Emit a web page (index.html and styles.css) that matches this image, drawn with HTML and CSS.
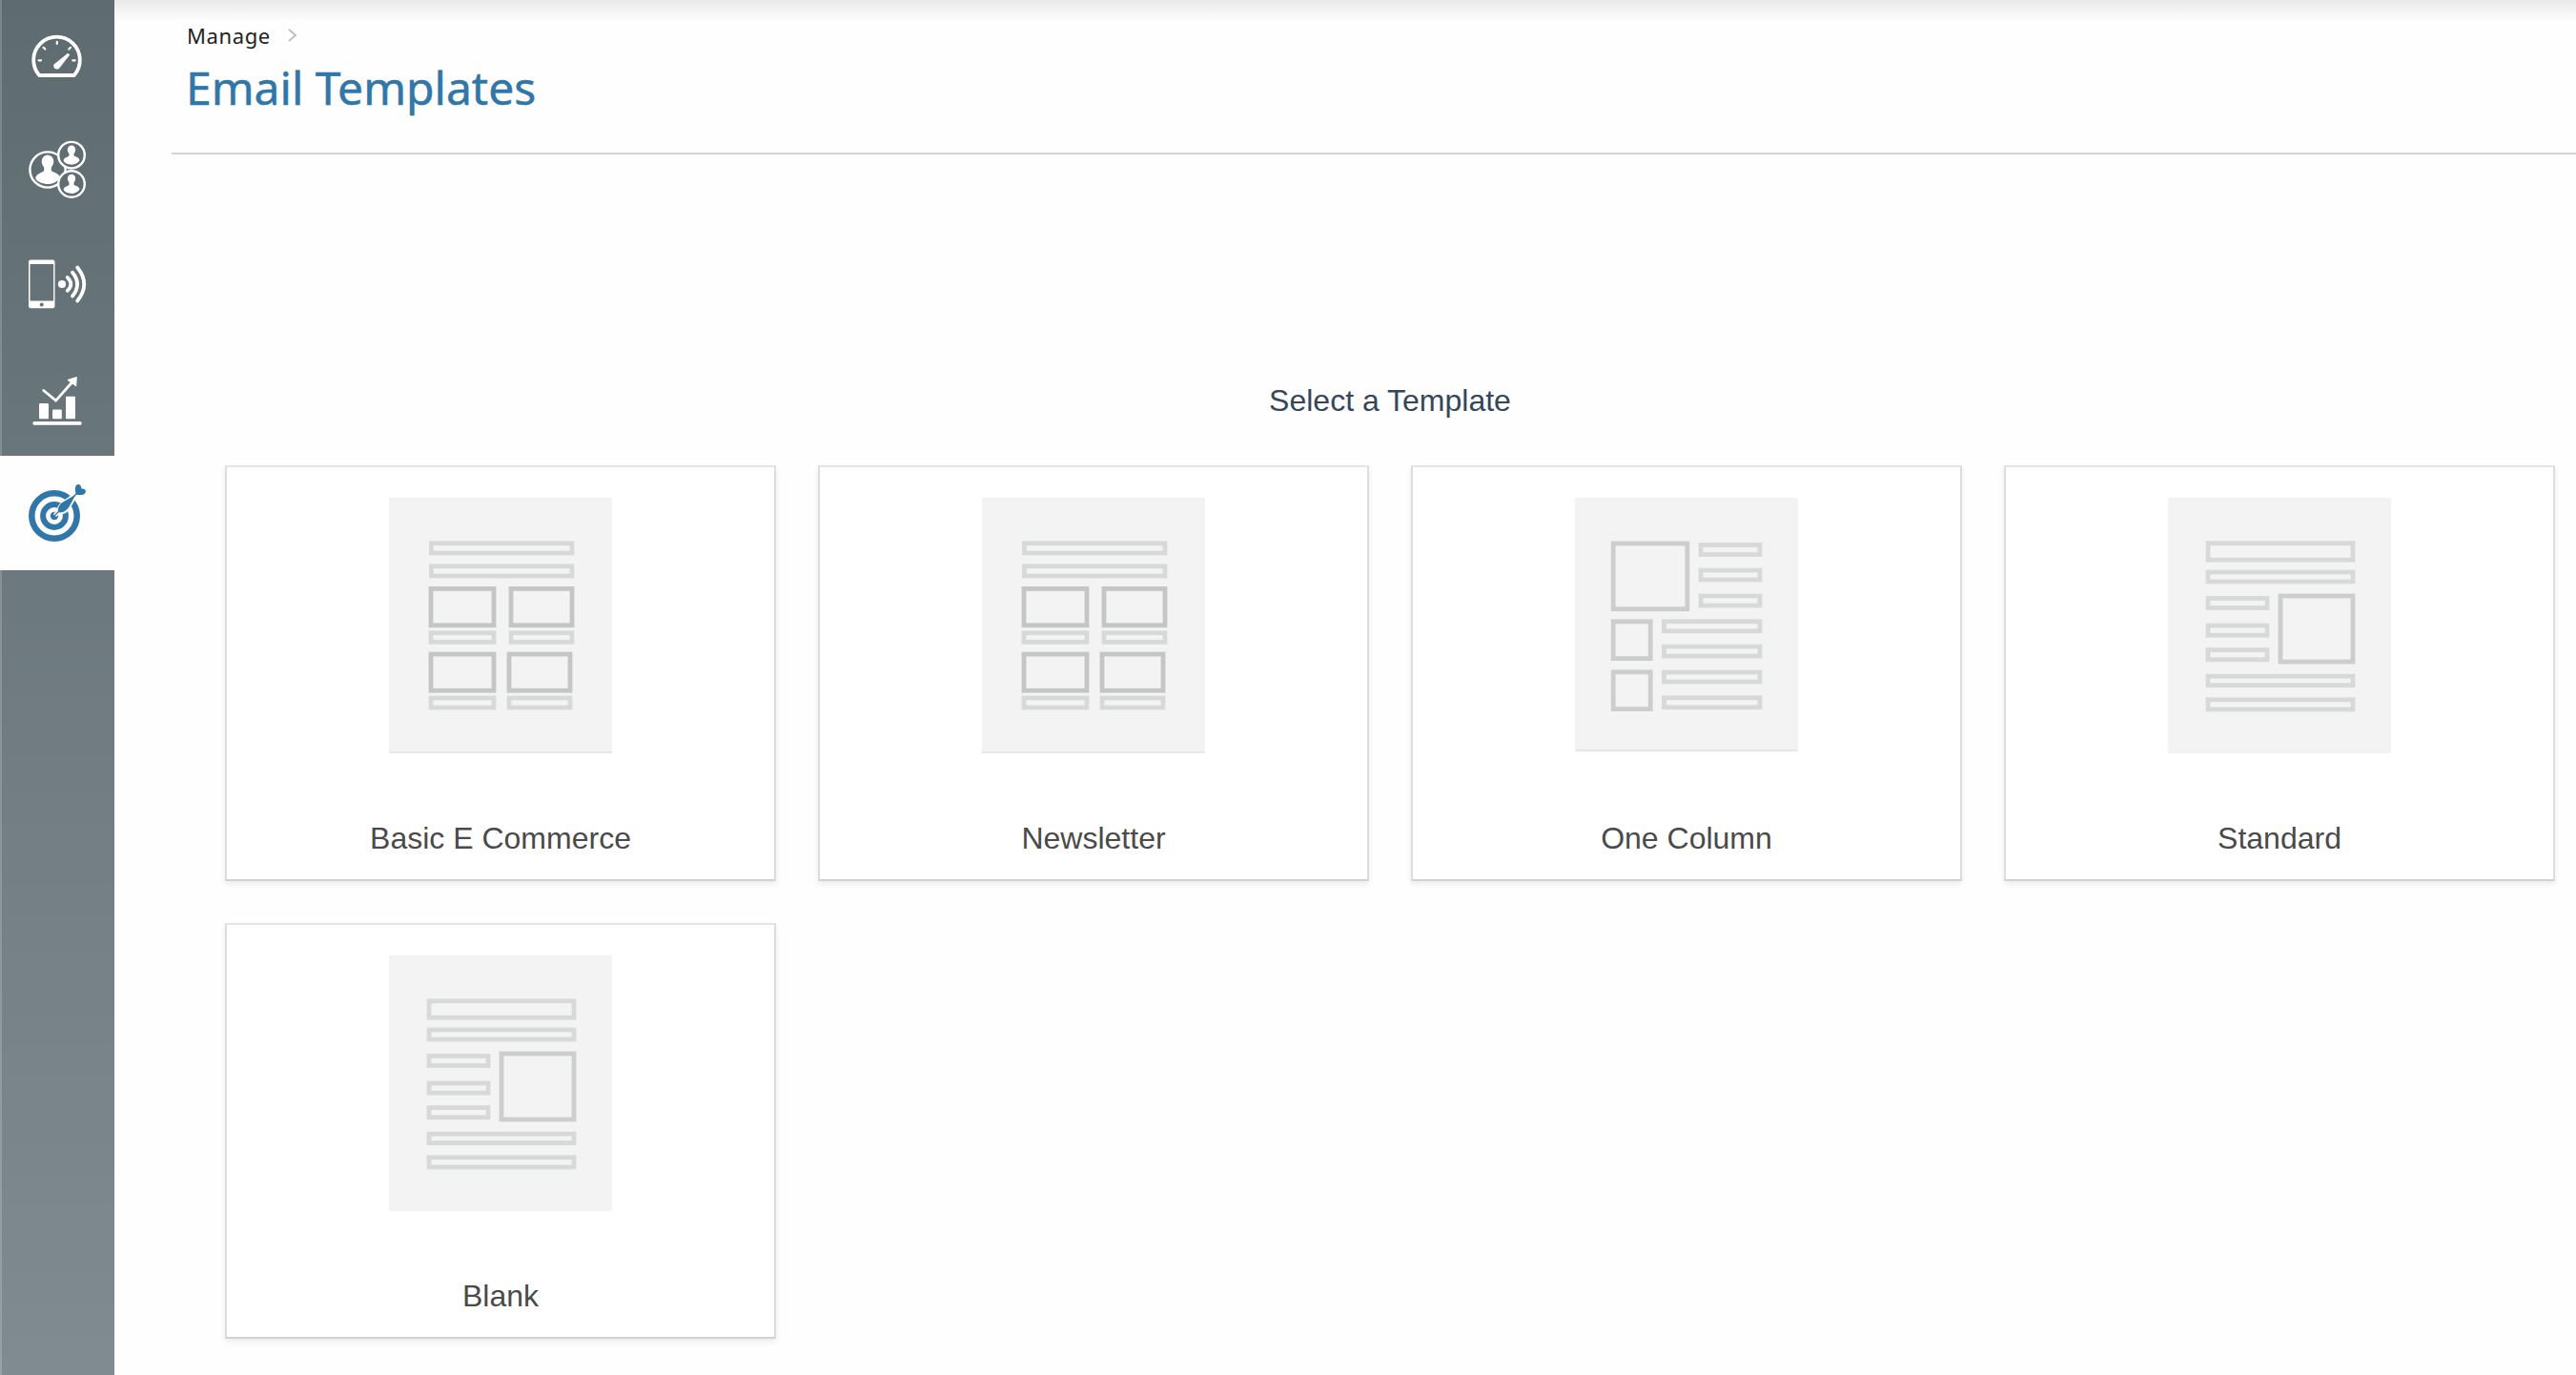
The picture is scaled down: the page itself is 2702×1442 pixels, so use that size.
FILE: index.html
```html
<!DOCTYPE html>
<html lang="en">
<head>
    <meta charset="UTF-8">
    <meta name="viewport" content="width=device-width, initial-scale=1.0">
    <title>Email Templates</title>
    <link rel="stylesheet" href="styles.css">
</head>
<body>

    <!-- Shared drawings -->
    <svg class="defs" width="0" height="0">
        <defs>
            <g id="person">
                <ellipse cx="0" cy="-8.4" rx="6.3" ry="7.2"/>
                <path d="M-3.8 -4h7.6v5c0 1.5 8.8 2.4 8.9 7.2C9 12.5 4.5 15 0 15S-12.5 12.5 -12.7 8.5C-12.5 4 -3.8 2.5 -3.8 1z"/>
                <path d="M3.8 1c0 1.5 8.7 3 8.9 7.5C10 13 5 15 0 15z"/>
            </g>
            <g id="thumb-grid">
                <path class="shade" d="M0 266h234v2H0z"/>
                <g class="bar">
                    <rect x="44.5" y="47.8" width="147.5" height="10.2"/>
                    <rect x="44.5" y="71.8" width="147.5" height="10.2"/>
                    <rect x="44" y="141.7" width="66" height="9.6"/>
                    <rect x="128" y="141.7" width="64" height="9.6"/>
                    <rect x="44" y="210" width="66" height="10"/>
                    <rect x="126" y="210" width="64" height="10"/>
                </g>
                <g class="box box-dark">
                    <rect x="44" y="95.4" width="66" height="38.4"/>
                    <rect x="128" y="95.4" width="64" height="38.4"/>
                    <rect x="44" y="164" width="66" height="38.2"/>
                    <rect x="126" y="164" width="64" height="38.2"/>
                </g>
            </g>
            <g id="thumb-article">
                <g class="bar">
                    <rect x="42" y="47.8" width="152" height="17.4"/>
                    <rect x="42" y="78" width="152" height="10"/>
                    <rect x="42" y="105.5" width="62" height="10"/>
                    <rect x="42" y="134" width="62" height="10.2"/>
                    <rect x="42" y="159.6" width="62" height="10.2"/>
                    <rect x="42" y="187.2" width="152" height="9.4"/>
                    <rect x="42" y="211.8" width="152" height="10.2"/>
                </g>
                <g class="box">
                    <rect x="118" y="103" width="76" height="69"/>
                </g>
            </g>
        </defs>
    </svg>

    <div class="sidebar">
        <a class="nav-item" href="#" aria-label="Dashboard">
            <svg viewBox="0 0 120 120">
                <path class="line" stroke-width="3.8" stroke-linejoin="round" d="M41.2 81A24.3 24.3 0 1 1 77.8 81z"/>
                <path class="line" stroke-width="2.2" stroke-linecap="round" d="M59.8 45.8v2.2M40.6 65.3h2.4M76.3 65.3h2.4M45.6 51.8l1.7 1.7M74 51.8l-1.7 1.7"/>
                <path d="M56.6 69.4L70.5 58.2Q72.5 57.4 73 59.8L62.3 73.4Q59.5 75.8 57 73.3Q55.3 71 56.6 69.4z"/>
            </svg>
        </a>
        <a class="nav-item" href="#" aria-label="Audience">
            <svg viewBox="0 0 120 120">
                <circle class="line bubble" cx="50" cy="60" r="18.6"/>
                <circle class="line bubble" cx="75" cy="44.7" r="13.8"/>
                <circle class="line bubble" cx="75" cy="75" r="13.8"/>
                <use href="#person" x="50" y="60"/>
                <use href="#person" transform="translate(75 44.7) scale(.66)"/>
                <use href="#person" transform="translate(75 75) scale(.66)"/>
            </svg>
        </a>
        <a class="nav-item" href="#" aria-label="Mobile">
            <svg viewBox="0 0 120 120">
                <path fill-rule="evenodd" d="M32 34.5h23.5a2 2 0 0 1 2 2v46.8a2 2 0 0 1-2 2H32a2 2 0 0 1-2-2V36.500a2 2 0 0 1 2-2zM31.5 39v38.5h24.6V39zM43.7 79.5a2 2 0 1 0 .01 0z"/>
                <circle cx="65" cy="60" r="4.1"/>
                <path class="line" stroke-width="3.8" stroke-linecap="round" d="M70.7 53Q78 60 70.7 66.800M76 47.700Q86.2 60 76 72.500M81.2 42.500Q95.3 60 81.2 77.500"/>
            </svg>
        </a>
        <a class="nav-item" href="#" aria-label="Reports">
            <svg viewBox="0 0 120 120">
                <rect x="41" y="65" width="10" height="16.3" rx="1"/>
                <rect x="55" y="71.6" width="9.8" height="9.7" rx="1"/>
                <rect x="69" y="57.7" width="10" height="23.6" rx="1"/>
                <rect x="34.3" y="84" width="51.4" height="3.8" rx="1.9"/>
                <path class="line" stroke-width="2.8" stroke-linecap="round" d="M45.7 51.5l12.9 10.6L75.5 43"/>
                <path stroke="#fff" stroke-linejoin="round" d="M80.3 37.6L71 40.5l8.7 6.3z"/>
            </svg>
        </a>
        <a class="nav-item active" href="#" aria-label="Campaigns">
            <svg viewBox="0 0 120 120">
                <circle class="line" cx="57" cy="63" r="23.7" stroke-width="6.5"/>
                <circle class="line" cx="57" cy="63" r="11.9" stroke-width="6"/>
                <circle cx="57" cy="63" r="4.2"/>
                <path class="dart-gap" d="M57.5 62.5l4-4C61.5 54.5 64 52 66 50.2L79.5 40.5 71 55C68 58.5 65 60 61.5 58.5"/>
                <path d="M61 59C60 54.500 63 50.500 66 48.500L79.5 40.500 72.500 53.500C70 57.500 65 60.500 61 59z"/>
                <path class="line" stroke-width="1.3" d="M57.5 62.5l5-5M77 43l6-6"/>
                <path d="M79.8 40.5C78.5 36 78.5 32 80.5 30.5C83 29 85.500 31 85.300 34.500C88 34 90.500 35.500 89.800 38C88.800 41.500 84 41.500 79.800 40.500z"/>
            </svg>
        </a>
    </div>

    <div class="main">
        <div class="header">
            <div class="breadcrumb">
                <a href="#">Manage</a>
                <svg class="chevron" viewBox="0 0 10 14"><path d="M1 .8l7 6.2-7 6.2"/></svg>
            </div>
            <h1>Email Templates</h1>
        </div>

        <div class="content">
            <h2>Select a Template</h2>

            <div class="templates">
                <a class="card" href="#">
                    <svg class="thumb" viewBox="0 0 234 268"><use href="#thumb-grid"/></svg>
                    <span>Basic E Commerce</span>
                </a>
                <a class="card" href="#">
                    <svg class="thumb" viewBox="0 0 234 268"><use href="#thumb-grid"/></svg>
                    <span>Newsletter</span>
                </a>
                <a class="card" href="#">
                    <svg class="thumb short" viewBox="0 0 234 266">
                        <path class="shade" d="M0 264h234v2H0z"/>
                        <g class="bar">
                            <rect x="132" y="49.5" width="62" height="10"/>
                            <rect x="132" y="76" width="62" height="10"/>
                            <rect x="132" y="103" width="62" height="10"/>
                            <rect x="93.5" y="129.8" width="100.5" height="10"/>
                            <rect x="93.5" y="156" width="100.5" height="10"/>
                            <rect x="93.5" y="183" width="100.5" height="10"/>
                            <rect x="93.5" y="209.8" width="100.5" height="10"/>
                        </g>
                        <g class="box">
                            <rect x="40.2" y="48" width="77.6" height="68.7"/>
                            <rect x="40.2" y="129.8" width="39" height="38.8"/>
                            <rect x="40.2" y="182.8" width="39" height="38.8"/>
                        </g>
                    </svg>
                    <span>One Column</span>
                </a>
                <a class="card" href="#">
                    <svg class="thumb" viewBox="0 0 234 268"><use href="#thumb-article"/></svg>
                    <span>Standard</span>
                </a>
                <a class="card" href="#">
                    <svg class="thumb" viewBox="0 0 234 268"><use href="#thumb-article"/></svg>
                    <span>Blank</span>
                </a>
            </div>
        </div>
    </div>

</body>
</html>
```
FILE: styles.css
```css
* {
    box-sizing: border-box;
}

body {
    margin: 0;
    display: flex;
    height: 100vh;
    overflow: hidden;
    background-color: #fefefe;
    font-family: "Liberation Sans", Arial, sans-serif;
}

a {
    color: inherit;
    text-decoration: none;
}

.defs {
    position: absolute;
}

/* SIDEBAR */
.sidebar {
    flex: 0 0 120px;
    height: 100%;
    overflow: hidden;
    /* light strip down the left edge, then the main fill */
    background:
        linear-gradient(#7b868b, #96a1a5) left / 2px 100% no-repeat,
        linear-gradient(#5e6b70, #7f8b90);
}

.nav-item {
    display: block;
    height: 120px;
    color: white;
}

.nav-item:first-child {
    margin-top: -2px;
}

.nav-item svg {
    display: block;
    width: 120px;
    height: 120px;
    fill: currentColor;
}

.nav-item .line {
    fill: none;
    stroke: currentColor;
}

.nav-item .bubble {
    fill: #606d72;
    stroke-width: 2.4;
}

.nav-item.active {
    background-color: #fefefe;
    color: #3176a9;
}

.dart-gap {
    stroke: #fefefe;
    stroke-width: 4.5;
}

/* PAGE */
.main {
    flex: 1;
    min-width: 0;
    background: linear-gradient(#e9e9e9, #fefefe 22px);
}

.header {
    height: 162px;
    margin-left: 60px;
    padding: 21px 0 0 15px;
    border-bottom: 2px solid #d3d5d5;
    font-family: "Noto Sans", sans-serif;
}

.breadcrumb {
    display: flex;
    align-items: center;
    gap: 18px;
    height: 32px;
    padding-left: 1px;
    color: #222;
    font-size: 22px;
    letter-spacing: 0.6px;
}

.chevron {
    width: 10px;
    height: 14px;
    fill: none;
    stroke: #bbb;
    stroke-width: 1.8;
}

h1 {
    margin: 6px 0 0;
    color: #3176a9;
    font-size: 48px;
    font-weight: 400;
    line-height: 66px;
    -webkit-text-stroke: 0.5px #3176a9;
}

.content {
    width: 2444px;
    margin-left: 116px;
}

h2 {
    margin: 0;
    padding-top: 240px;
    color: #34475a;
    font-size: 32px;
    font-weight: 400;
    line-height: 36px;
    text-align: center;
}

.templates {
    display: grid;
    grid-template-columns: repeat(4, 578px);
    gap: 44px;
    margin-top: 50px;
}

.card {
    display: flex;
    flex-direction: column;
    align-items: center;
    height: 436px;
    padding-top: 32px;
    border: 2px solid #dcdddd;
    border-top-color: #e4e4e4;
    border-bottom-color: #d0d1d1;
    background-color: white;
    box-shadow: 0 3px 6px rgba(0, 0, 0, 0.08);
    color: #4a4a4a;
    font-size: 32px;
    line-height: 36px;
}

.card span {
    margin-top: auto;
    margin-bottom: 25px;
}

.thumb {
    width: 234px;
    height: 268px;
    background-color: #f3f3f3;
}

.thumb.short {
    height: 266px;
}

.bar,
.box {
    fill: none;
    stroke: #d7d9d9;
    stroke-width: 4.8;
}

.box {
    stroke: #cbcdce;
}

.box-dark {
    stroke: #c3c5c6;
}

.shade {
    fill: #e7e7e7;
}
```
